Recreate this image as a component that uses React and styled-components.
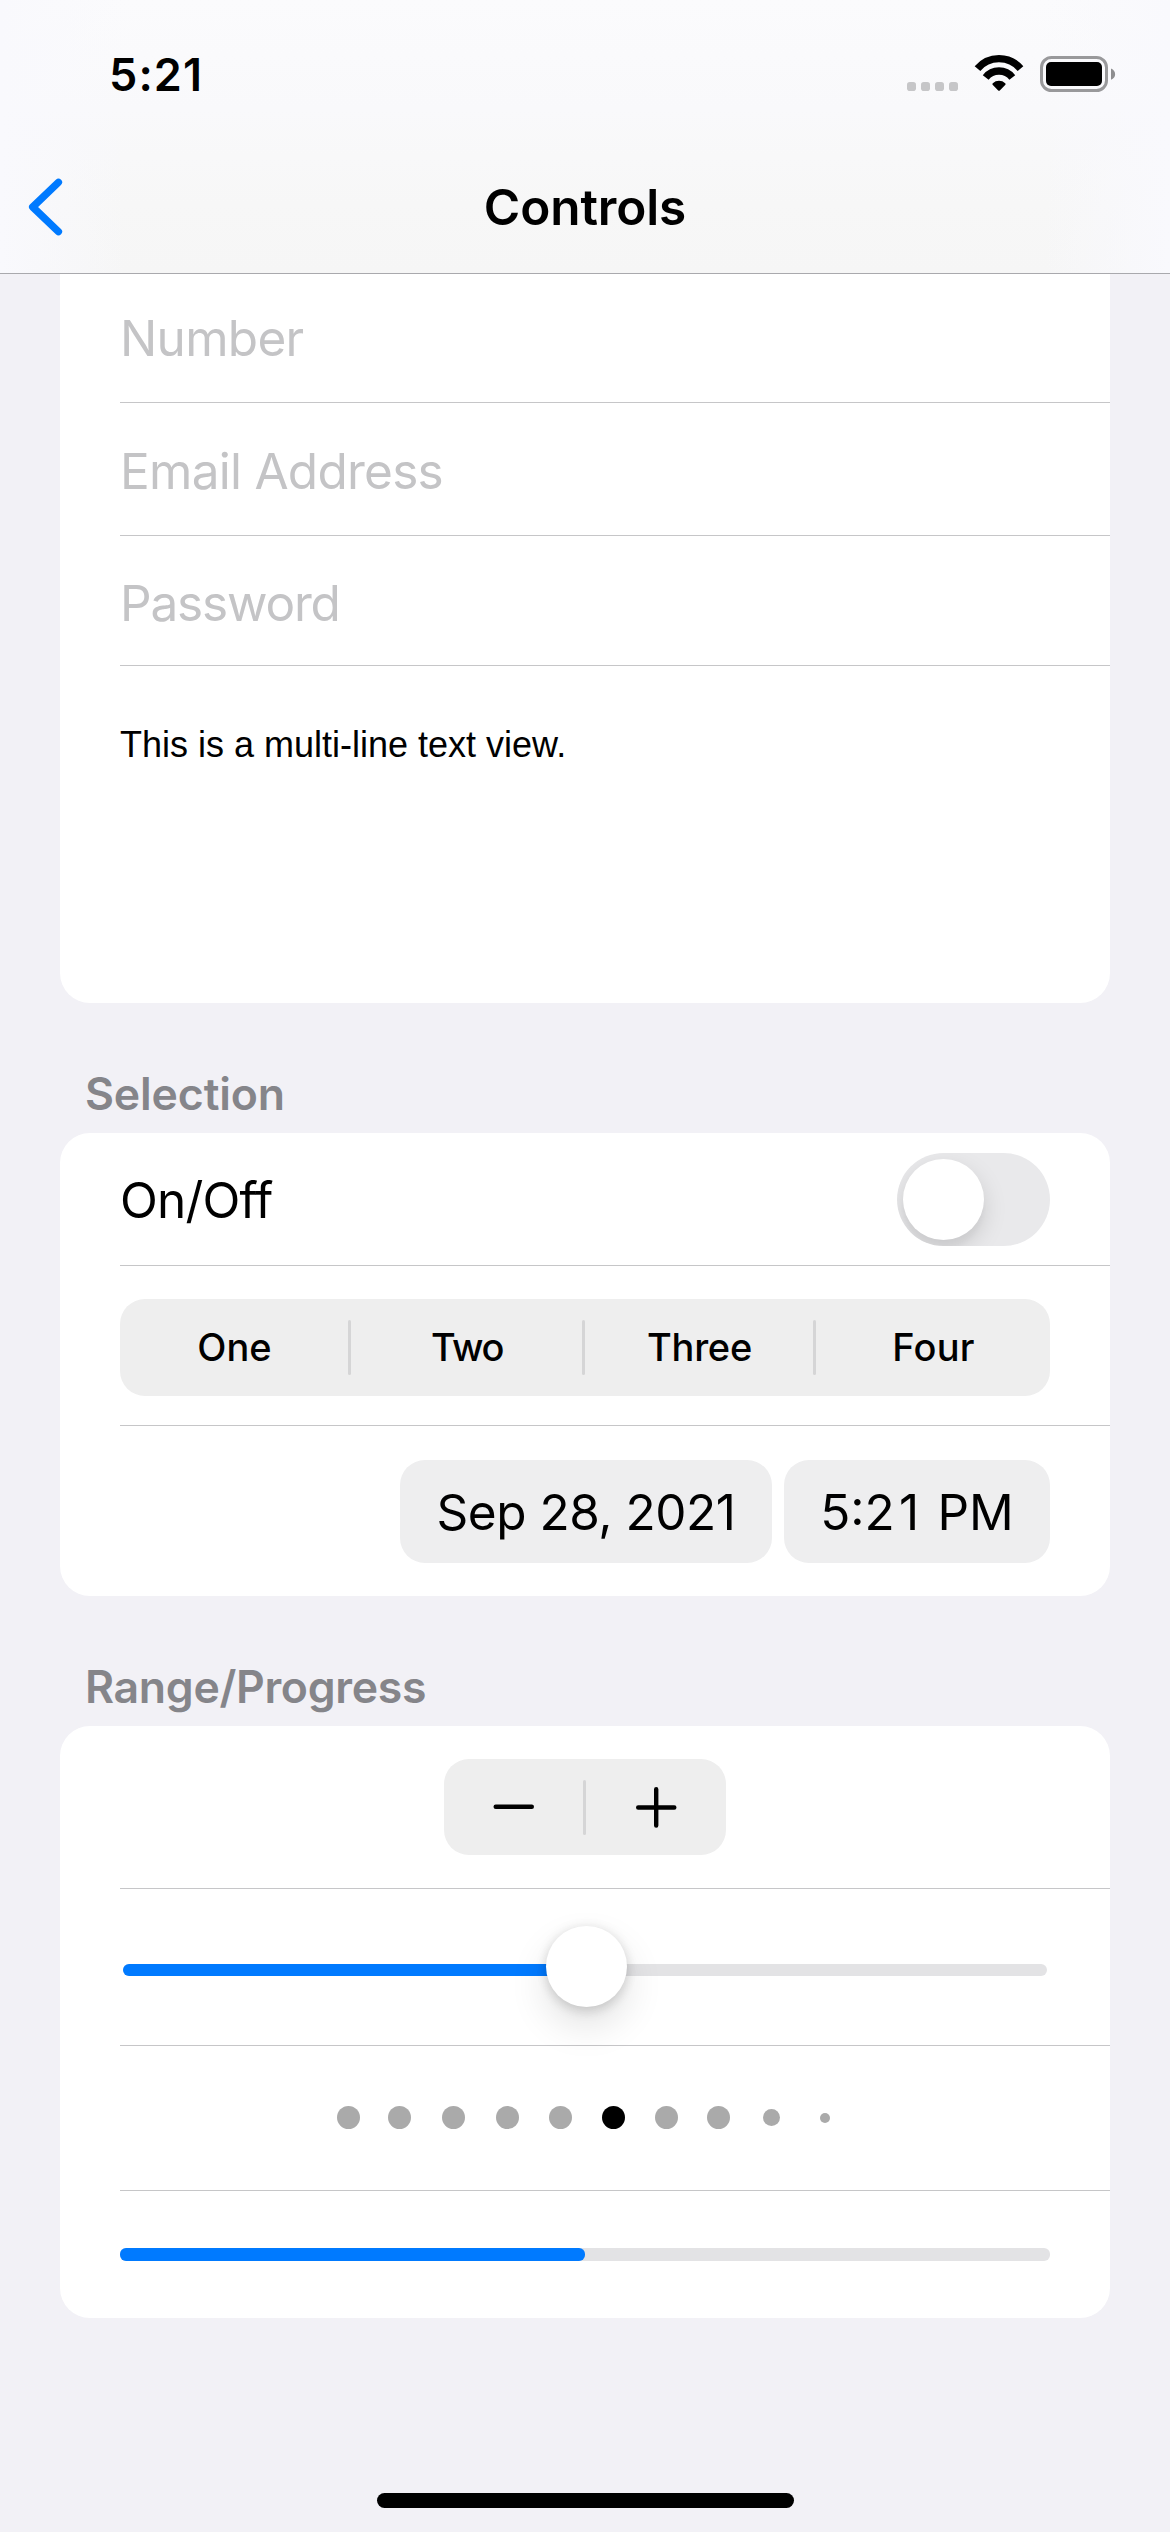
import React from "react";
import styled, { createGlobalStyle } from "styled-components";

const Global = createGlobalStyle`
  * { box-sizing: border-box; }
  body { margin: 0; background: #f2f1f6; }
`;

const Screen = styled.div`
  width: 1170px;
  height: 2532px;
  display: flex;
  flex-direction: column;
  overflow: hidden;
  background: #f2f1f6;
  color: #000;
  font-family: Inter, "Liberation Sans", sans-serif;
`;

const Header = styled.header`
  height: 274px;
  flex: none;
  border-bottom: 1px solid #a9a9ad;
  background:
    linear-gradient(90deg, rgba(249, 249, 253, 1), rgba(249, 249, 253, 0) 11%, rgba(249, 249, 253, 0) 89%, rgba(249, 249, 253, 1)),
    linear-gradient(180deg, #fbfbfd, #f9f9fb 40%, #f7f7f7 75%, #f6f6f6);
`;

const StatusBar = styled.div`
  height: 141px;
  display: flex;
  justify-content: space-between;
  align-items: flex-start;
  padding: 49px 50px 0 109px;
`;

const Label = styled.span`
  display: block;
  white-space: nowrap;
  line-height: ${(p) => p.$line || 60}px;
  font-size: ${(p) => p.$size || 49.5}px;
  font-weight: ${(p) => p.$weight || 400};
  letter-spacing: ${(p) => p.$track || 0}px;
  color: ${(p) => p.$color || "#000"};
`;

const Minutes = styled.span`
  letter-spacing: 4.3px;
`;

const NavBar = styled.div`
  height: 132px;
  display: grid;
  grid-template-columns: 1fr auto 1fr;
  align-items: center;
  padding: 0 28px;
`;

const Scroll = styled.main`
  display: flex;
  flex-direction: column;
  padding: 0 60px;
`;

const Card = styled.section`
  background: #fff;
  border-radius: ${(p) => (p.$cut ? "0 0 30px 30px" : "30px")};
  padding-left: 60px;
`;

const Row = styled.div`
  height: ${(p) => p.$h}px;
  display: flex;
  align-items: ${(p) => p.$align || "center"};
  justify-content: ${(p) => p.$justify || "space-between"};
  padding-right: 60px;
  padding-top: ${(p) => p.$top || 0}px;
  padding-bottom: ${(p) => p.$bottom || 0}px;
  border-bottom: ${(p) => (p.$last ? "none" : "1px solid #c6c6c8")};
`;

const SectionTitle = styled.h2`
  margin: 0;
  height: 130px;
  padding: 61px 0 0 25px;
`;

const BodyText = styled.p`
  margin: 0;
  font: 36px/42px "Liberation Sans", Arial, sans-serif;
`;

const Switch = styled.div`
  width: 153px;
  height: 93px;
  border-radius: 47px;
  padding: 6px;
  overflow: hidden;
  background: #e9e9eb;
`;

const Knob = styled.div`
  width: 81px;
  height: 81px;
  flex: none;
  border-radius: 50%;
  background: #fff;
  box-shadow: 0 9px 24px rgba(0, 0, 0, 0.13), 0 9px 6px rgba(0, 0, 0, 0.03);
`;

const Segments = styled.div`
  height: ${(p) => p.$h || 97}px;
  width: ${(p) => p.$w || 930}px;
  display: grid;
  grid-template-columns: ${(p) => p.$cols};
  align-items: center;
  justify-items: center;
  border-radius: 25px;
  background: #eeeeee;
`;

const Divider = styled.i`
  width: 3px;
  height: 55px;
  border-radius: 2px;
  background: #d5d5d6;
`;

const SegmentLabel = styled(Label)`
  padding: 0 0 2px 1px;
`;

const Pills = styled.div`
  display: flex;
  gap: 12px;
`;

const Pill = styled.div`
  width: ${(p) => p.$w}px;
  height: 103px;
  display: flex;
  align-items: center;
  justify-content: center;
  border-radius: 25px;
  background: #eeeeef;
`;

const Track = styled.div`
  width: ${(p) => p.$w}px;
  height: ${(p) => p.$h}px;
  margin: 0 auto;
  display: flex;
  align-items: center;
  border-radius: 6px;
  background: #e3e3e5;
`;

const Fill = styled.div`
  height: 100%;
  border-radius: 6px;
  background: #007aff;
`;

const Thumb = styled(Knob)`
  margin: -7px 0 0 -39px;
  box-shadow: 0 18px 39px rgba(0, 0, 0, 0.12), 0 1px 12px rgba(0, 0, 0, 0.11), 0 6px 12px rgba(0, 0, 0, 0.07);
`;

const Dots = styled.div`
  display: grid;
  grid-template-columns: 49px 53px 55px 53px 53px 53px 52px 53px 53px 54px;
  justify-items: center;
  align-items: center;
  margin-left: 204px;
`;

const Dot = styled.i`
  width: ${(p) => p.$size}px;
  height: ${(p) => p.$size}px;
  border-radius: 50%;
  background: ${(p) => (p.$on ? "#000" : "#aaaaaa")};
`;

const HomeArea = styled.footer`
  margin-top: auto;
  padding-bottom: 24px;
  display: flex;
  justify-content: center;
`;

const HomeBar = styled.div`
  width: 417px;
  height: 15px;
  border-radius: 8px;
  background: #000;
`;

const StatusIcons = () => (
  <svg width="220" height="50" viewBox="900 49 220 50">
    <g fill="#c6c6c8">
      <rect x="907" y="82" width="9" height="9" rx="2.8" />
      <rect x="921" y="82" width="9" height="9" rx="2.8" />
      <rect x="935" y="82" width="9" height="9" rx="2.8" />
      <rect x="949" y="82" width="9" height="9" rx="2.8" />
    </g>
    <g fill="none" stroke="#000" strokeWidth="7.4">
      <path d="M977.5 68.6 A28.1 28.1 0 0 1 1020.5 68.6" />
      <path d="M985.7 77.5 A16.9 16.9 0 0 1 1012.3 77.5" />
    </g>
    <path d="M998.2 90.5 L992.6 84.7 Q992 84 992.8 83.3 A9 9 0 0 1 1005.2 83.3 Q1006 84 1005.4 84.7 L999.8 90.5 Q999 91.2 998.2 90.5 Z" fill="#000" />
    <rect x="1041.5" y="57.5" width="65" height="33" rx="10" fill="none" stroke="#99999b" strokeWidth="3" />
    <rect x="1046" y="62" width="56" height="24" rx="5" fill="#000" />
    <path d="M1111 68.4 C1116.5 70.6 1116.5 77.6 1111 79.8 Z" fill="#8e8e90" />
  </svg>
);

const BackIcon = () => (
  <svg width="36" height="60" viewBox="28 177 36 60" fill="none">
    <path d="M58.4 182.3 L32.7 207 L58.4 231.6" stroke="#007aff" strokeWidth="7.4" strokeLinecap="round" strokeLinejoin="round" />
  </svg>
);

const MinusIcon = () => (
  <svg width="42" height="42" viewBox="0 0 42 42" stroke="#000" strokeWidth="4.4" strokeLinecap="round">
    <path d="M2.7 20.7 H38.8" />
  </svg>
);

const PlusIcon = () => (
  <svg width="42" height="42" viewBox="0 0 42 42" stroke="#000" strokeWidth="4.4" strokeLinecap="round">
    <path d="M3.2 21.5 H39.3 M21.2 3.2 V39.5" />
  </svg>
);

const fields = [
  { text: "Number", h: 129, top: 0, track: -0.7 },
  { text: "Email Address", h: 133, top: 4, track: -0.73 },
  { text: "Password", h: 130, top: 4, track: -1.17 },
];

const segments = [
  { text: "One", track: 0 },
  { text: "Two", track: -1.4 },
  { text: "Three", track: -0.25 },
  { text: "Four", track: 0.3 },
];

const dots = [23, 23, 23, 23, 23, 23, 23, 23, 17, 10];
const progress = 0.5;

export default function App() {
  return (
    <Screen>
      <Global />
      <Header>
        <StatusBar>
          <Label $line={52} $size={45} $weight={600} $track={1.1}>5:21</Label>
          <StatusIcons />
        </StatusBar>
        <NavBar>
          <BackIcon />
          <Label $weight={600} $track={-0.1}>Controls</Label>
        </NavBar>
      </Header>
      <Scroll>
        <Card $cut>
          {fields.map((f) => (
            <Row key={f.text} $h={f.h} $top={f.top}>
              <Label $color="#c4c4c6" $track={f.track}>{f.text}</Label>
            </Row>
          ))}
          <Row $h={337} $last $align="flex-start" $top={58}>
            <BodyText>This is a multi-line text view.</BodyText>
          </Row>
        </Card>
        <SectionTitle>
          <Label $size={44.6} $weight={600} $track={-0.14} $color="#85858a">Selection</Label>
        </SectionTitle>
        <Card>
          <Row $h={133} $top={1}>
            <Label $track={-0.85}>On/Off</Label>
            <Switch><Knob /></Switch>
          </Row>
          <Row $h={160} $align="flex-start" $top={33}>
            <Segments $cols="228px 3px 231px 3px 228px 3px 234px">
              {segments.map((s, i) => (
                <React.Fragment key={s.text}>
                  {i > 0 && <Divider />}
                  <SegmentLabel $size={38} $weight={500} $track={s.track}>{s.text}</SegmentLabel>
                </React.Fragment>
              ))}
            </Segments>
          </Row>
          <Row $h={170} $last $align="flex-start" $justify="flex-end" $top={34}>
            <Pills>
              <Pill $w={372}><Label $track={-0.46}>Sep 28, 2021</Label></Pill>
              <Pill $w={266}><Label>5:<Minutes>21</Minutes> PM</Label></Pill>
            </Pills>
          </Row>
        </Card>
        <SectionTitle>
          <Label $size={44.6} $weight={600} $track={-0.32} $color="#85858a">Range/Progress</Label>
        </SectionTitle>
        <Card>
          <Row $h={163} $justify="center">
            <Segments $w={282} $h={96} $cols="139px 3px 140px">
              <MinusIcon />
              <Divider />
              <PlusIcon />
            </Segments>
          </Row>
          <Row $h={157} $top={6}>
            <Track $w={924} $h={12}>
              <Fill style={{ width: `${progress * 100}%` }} />
              <Thumb />
            </Track>
          </Row>
          <Row $h={145} $bottom={1} $justify="flex-start">
            <Dots>
              {dots.map((d, i) => <Dot key={i} $size={d} $on={i === 5} />)}
            </Dots>
          </Row>
          <Row $h={127} $last>
            <Track $w={930} $h={13}>
              <Fill style={{ width: `${progress * 100}%` }} />
            </Track>
          </Row>
        </Card>
      </Scroll>
      <HomeArea><HomeBar /></HomeArea>
    </Screen>
  );
}
